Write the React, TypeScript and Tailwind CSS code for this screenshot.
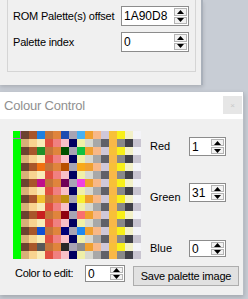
const evenBase = ['#00ff00', '#6b4330', '#a8562a', '', '#c4743a', '#e0843c', '', '#a8a4b4', '', '#f0a030', '#f8b888', '#d0c8d8', '#f8c038', '#f8f018', '#f2f0c8', '#f4f4f8']
const oddRow = ['#00ff00', '#d8b078', '#f8d490', '#f8ecb8', '#e05040', '#f08080', '#f8c0c8', '#000060', '#f0f0a8', '#d8d8d0', '#a8a8a8', '#606068', '#f8b848', '#888888', '#404048', '#c8c4d0']

// the three cells that change in every even row: col 3, col 6, col 8
const variants = [
  ['#1e80e0', '#1c4cb0', '#48b0f0'],
  ['#209028', '#005000', '#10c040'],
  ['#f07010', '#b85000', '#f8a818'],
  ['#c0108a', '#700058', '#f040e0'],
  ['#f0c030', '#c09010', '#f8f030'],
  ['#c82020', '#900010', '#f87070'],
  ['#1050d0', '#000078', '#2088f0'],
  ['#585858', '#282828', '#8c8c8c'],
]

const rows: string[][] = []
for (let r = 0; r < 16; r++) {
  if (r % 2 === 1) {
    rows.push(oddRow)
  } else {
    const v = variants[r / 2]
    const row = [...evenBase]
    row[3] = v[0]
    row[6] = v[1]
    row[8] = v[2]
    rows.push(row)
  }
}

function Arrow({ up }: { up: boolean }) {
  return (
    <svg width="7" height="4" viewBox="0 0 7 4">
      {up ? <path d="M0 4 L3.5 0 L7 4 Z" fill="#000" /> : <path d="M0 0 L3.5 4 L7 0 Z" fill="#000" />}
    </svg>
  )
}

function Spin({ value, w, h }: { value: string; w: string; h: string }) {
  return (
    <div className={`${w} ${h} shrink-0 flex border border-[#8c8c8c] bg-white`}>
      <div className="flex-1 pl-[2px] text-[12px] leading-none flex items-center">{value}</div>
      <div className="w-[15px] flex flex-col p-[1px] gap-[1px]">
        <div className="flex-1 flex items-center justify-center bg-[#f2f2f2] border border-[#b4b4b4]">
          <Arrow up />
        </div>
        <div className="flex-1 flex items-center justify-center bg-[#f2f2f2] border border-[#b4b4b4]">
          <Arrow up={false} />
        </div>
      </div>
    </div>
  )
}

export default function App() {
  return (
    <div
      className="w-[248px] h-[299px] overflow-hidden flex flex-col bg-[#c8cdd5] text-[11px] leading-[13px] text-black"
      style={{ fontFamily: '"Liberation Sans", Arial, sans-serif' }}
    >
      {/* window behind */}
      <div className="w-[203px] h-[85px] shrink-0 bg-[#f0f0f0] border-r-2 border-[#a9b0ba] shadow-[0_2px_4px_rgba(0,0,0,0.15)]">
        <div className="ml-[7px] w-[189px] h-[72px] border-l border-r border-b border-[#d5d5d5] pl-[5px] pt-[6px] flex flex-col gap-[6px]">
          <div className="flex items-center h-[20px]">
            <span className="w-[108px] tracking-[-0.2px]">ROM Palette(s) offset</span>
            <Spin value="1A90D8" w="w-[68px]" h="h-[20px]" />
          </div>
          <div className="flex items-center h-[20px]">
            <span className="w-[108px] tracking-[-0.2px]">Palette index</span>
            <Spin value="0" w="w-[68px]" h="h-[20px]" />
          </div>
        </div>
      </div>

      {/* Colour Control window */}
      <div className="mt-[7px] w-[244px] h-[203px] shrink-0 flex flex-col border-r border-[#b8bdc5] shadow-[0_2px_5px_rgba(0,0,0,0.2)]">
        <div className="h-[27px] bg-white flex items-start justify-between">
          <span className="mt-[6px] ml-[4px] text-[13px] leading-[15px] text-[#909090] tracking-[-0.2px]">Colour Control</span>
          <div className="mt-[4px] mr-[1px] w-[19px] h-[18px] bg-[#e6e6e6] flex items-center justify-center text-[8px] text-[#c8c8c8]">
            ×
          </div>
        </div>
        <div className="flex-1 bg-[#f0f0f0] flex flex-col">
          <div className="flex pt-[12px] pl-[13px]">
            <div className="grid grid-cols-[repeat(16,8px)] grid-rows-[repeat(16,8px)] w-[128px] h-[128px]">
              {rows.map((row, r) =>
                row.map((c, i) => (
                  <div
                    key={`${r}-${i}`}
                    className={r === 0 && i === 0 ? 'border-r border-b border-[#b060c0]' : ''}
                    style={{ backgroundColor: c }}
                  />
                ))
              )}
            </div>
            <div className="ml-[9px] pt-[6px] flex flex-col">
              <div className="h-[19px] flex items-center">
                <span className="w-[39px]">Red</span>
                <Spin value="1" w="w-[37px]" h="h-[19px]" />
              </div>
              <div className="mt-[27px] h-[19px] flex items-start">
                <span className="w-[39px] mt-[8px]">Green</span>
                <Spin value="31" w="w-[37px]" h="h-[19px]" />
              </div>
              <div className="mt-[38px] h-[17px] flex items-center">
                <span className="w-[39px]">Blue</span>
                <Spin value="0" w="w-[37px]" h="h-[17px]" />
              </div>
            </div>
          </div>
          <div className="flex items-start pt-[6px] pl-[15px]">
            <span className="w-[70px] mt-[2px] tracking-[-0.3px]">Color to edit:</span>
            <Spin value="0" w="w-[40px]" h="h-[17px]" />
            <button className="ml-[8px] mt-[1px] w-[106px] h-[20px] bg-[#e1e1e1] border border-[#adadad] text-[11px] tracking-[-0.2px]">
              Save palette image
            </button>
          </div>
        </div>
      </div>
    </div>
  )
}
